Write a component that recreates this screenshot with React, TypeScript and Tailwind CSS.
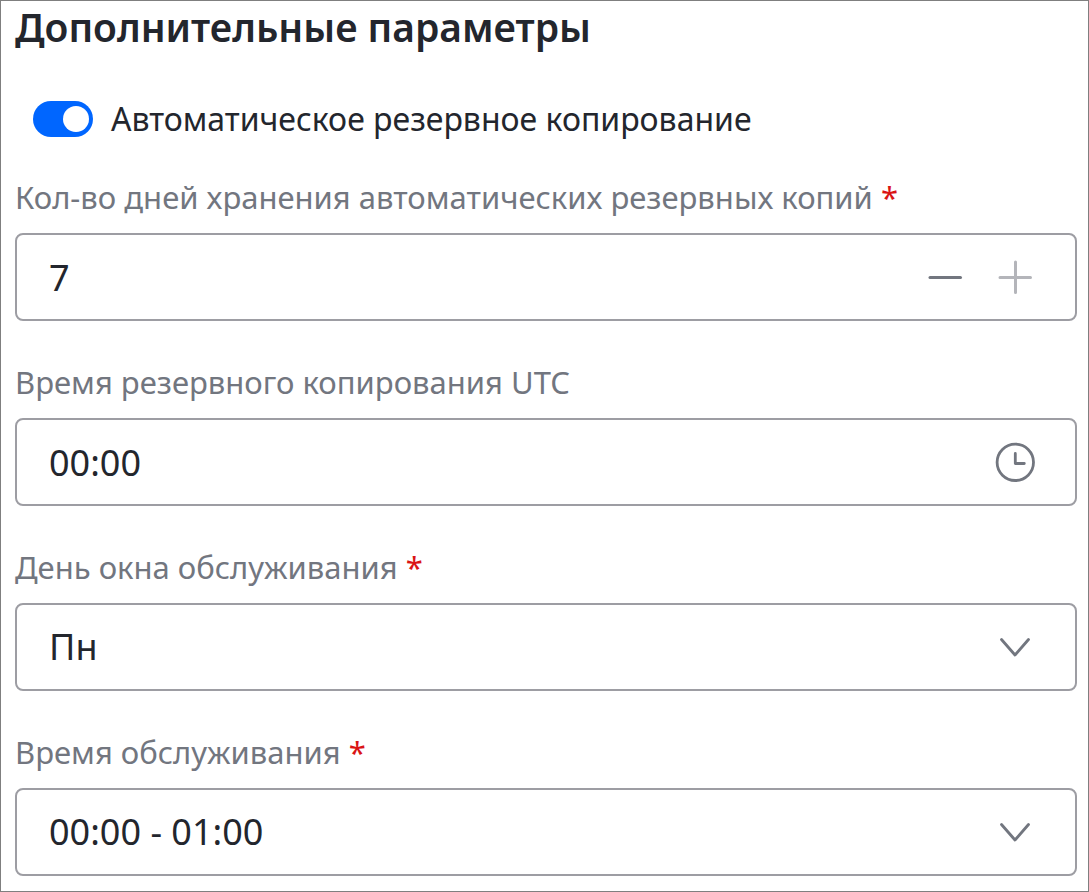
import React, { useState } from "react";

const WEEK_DAYS = ["Пн", "Вт", "Ср", "Чт", "Пт", "Сб", "Вс"];
const MAX_DAYS = 7;

const HOUR_SLOTS = Array.from({ length: 24 }, (_, hour) => {
  const from = String(hour).padStart(2, "0");
  const to = String((hour + 1) % 24).padStart(2, "0");
  return `${from}:00 - ${to}:00`;
});

type FieldProps = {
  id: string;
  label: string;
  required?: boolean;
  children: React.ReactNode;
};

function Field({ id, label, required, children }: FieldProps) {
  return (
    <div className="flex flex-col gap-4">
      <label htmlFor={id} className="text-[31px] leading-10 text-[#72767f]">
        {label}
        {required && <span className="text-[#da1415]"> *</span>}
      </label>
      <div className="flex h-[88px] items-center rounded-lg border-2 border-[#9d9da3] bg-white focus-within:border-[#0066ff]">
        {children}
      </div>
    </div>
  );
}

type SelectProps = {
  id: string;
  value: string;
  options: string[];
  onChange: (value: string) => void;
};

function Select({ id, value, options, onChange }: SelectProps) {
  return (
    <div className="grid h-full w-full items-center">
      <select
        id={id}
        value={value}
        onChange={(e) => onChange(e.target.value)}
        className="col-start-1 row-start-1 h-full w-full appearance-none bg-transparent pr-24 pl-8 text-4xl leading-10 outline-none"
      >
        {options.map((option) => (
          <option key={option}>{option}</option>
        ))}
      </select>
      <svg
        viewBox="0 0 40 40"
        className="pointer-events-none col-start-1 row-start-1 mr-10 h-10 w-10 justify-self-end text-[#72767f]"
        fill="none"
        stroke="currentColor"
        strokeWidth="2.8"
        strokeLinecap="round"
        strokeLinejoin="round"
      >
        <path d="M6.5 12.5 20 28l13.5-15.5" />
      </svg>
    </div>
  );
}

export default function App() {
  const [autoBackup, setAutoBackup] = useState(true);
  const [days, setDays] = useState(7);
  const [backupTime, setBackupTime] = useState("00:00");
  const [day, setDay] = useState("Пн");
  const [slot, setSlot] = useState(HOUR_SLOTS[0]);

  return (
    <main className="min-h-screen border border-[#7f7f7f] bg-white pr-[11px] pb-3 pl-[14px] font-['Noto_Sans','Open_Sans',sans-serif] text-[#23262d]">
      <h1 className="text-[39px] leading-[52px] font-semibold">Дополнительные параметры</h1>

      {/* Auto backup toggle */}
      <div className="mt-11 flex h-11 items-center gap-[18px] pl-[18px]">
        <input
          id="auto-backup"
          type="checkbox"
          role="switch"
          checked={autoBackup}
          onChange={(e) => setAutoBackup(e.target.checked)}
          className="flex h-9 w-[60px] shrink-0 appearance-none items-center rounded-full bg-[#b4b5ba] px-1 before:h-[26px] before:w-[26px] before:rounded-full before:bg-white before:content-[''] checked:justify-end checked:bg-[#0066ff]"
        />
        <label htmlFor="auto-backup" className="text-[32px] leading-10">
          Автоматическое резервное копирование
        </label>
      </div>

      <div className="mt-9 flex flex-col gap-[41px]">
        <Field id="days" label="Кол-во дней хранения автоматических резервных копий" required>
          <input
            id="days"
            type="text"
            inputMode="numeric"
            value={days}
            onChange={(e) => setDays(Math.min(MAX_DAYS, Number(e.target.value) || 1))}
            className="h-full min-w-0 flex-1 bg-transparent pl-8 text-4xl leading-10 outline-none"
          />
          <div className="mr-10 flex gap-[30px]">
            <button
              type="button"
              aria-label="Уменьшить"
              disabled={days <= 1}
              onClick={() => setDays(days - 1)}
              className="text-[#72767f] disabled:text-[#b4b5ba]"
            >
              <svg viewBox="0 0 40 40" className="h-10 w-10" stroke="currentColor" strokeWidth="3" strokeLinecap="round">
                <path d="M5 20.5h30.5" />
              </svg>
            </button>
            <button
              type="button"
              aria-label="Увеличить"
              disabled={days >= MAX_DAYS}
              onClick={() => setDays(days + 1)}
              className="text-[#72767f] disabled:text-[#b4b5ba]"
            >
              <svg viewBox="0 0 40 40" className="h-10 w-10" stroke="currentColor" strokeWidth="3" strokeLinecap="round">
                <path d="M5 20.5h30.5M20.5 5v30.500" />
              </svg>
            </button>
          </div>
        </Field>

        <Field id="backup-time" label="Время резервного копирования UTC">
          <input
            id="backup-time"
            type="text"
            value={backupTime}
            onChange={(e) => setBackupTime(e.target.value)}
            className="h-full min-w-0 flex-1 bg-transparent pl-8 text-4xl leading-10 outline-none"
          />
          <svg
            viewBox="0 0 40 40"
            className="mr-10 h-10 w-10 shrink-0 text-[#72767f]"
            fill="none"
            stroke="currentColor"
            strokeWidth="2.8"
            strokeLinecap="round"
            strokeLinejoin="round"
          >
            <circle cx="20.3" cy="20.3" r="18.2" />
            <path d="M20.3 11.5v10h9" />
          </svg>
        </Field>

        <Field id="day" label="День окна обслуживания" required>
          <Select id="day" value={day} options={WEEK_DAYS} onChange={setDay} />
        </Field>

        <Field id="slot" label="Время обслуживания" required>
          <Select id="slot" value={slot} options={HOUR_SLOTS} onChange={setSlot} />
        </Field>
      </div>
    </main>
  );
}
